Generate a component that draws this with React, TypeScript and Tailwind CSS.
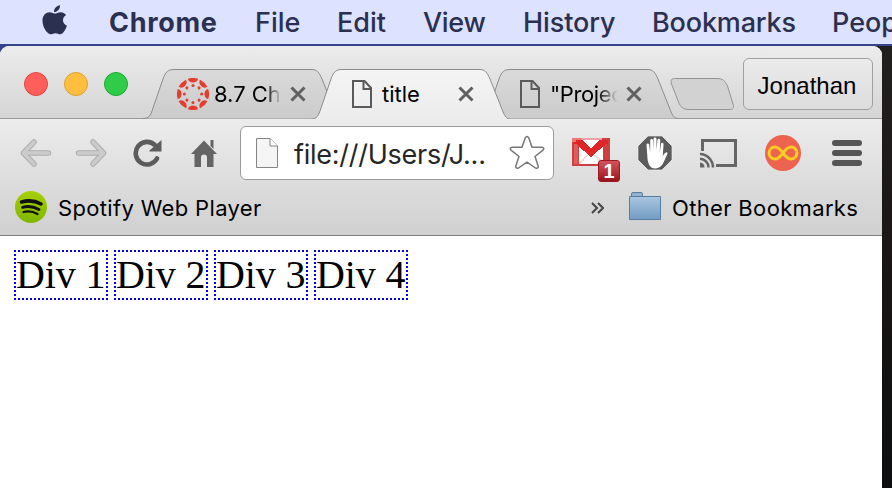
import React from "react";

const ui = "font-['Inter','Liberation_Sans',sans-serif]";

function Apple() {
  return (
    <svg className="-mt-[7px] ml-[42px] h-[32px] w-[26px] shrink-0" viewBox="0 0 27 33" preserveAspectRatio="none" fill="#2b3050">
      <path d="M18.700 1.200c.2 3.600-2.600 7-6.200 7C12.200 4.700 15.200 1.500 18.700 1.200z" />
      <path d="M13.600 9.900c1.300 0 3-1.500 5.700-1.500 2.500 0 4.500 1.200 5.700 3-4.700 2.900-4 9 .9 11-1.200 3.600-4 8.800-7.100 8.900-1.800 0-2.600-1.100-4.800-1.100s-3.100 1.100-4.800 1.100C5.600 31.400.6 24 .5 17.600.4 11.700 4.100 8.600 8 8.500c2.300 0 4.200 1.400 5.600 1.400z" />
    </svg>
  );
}

const menus = [
  { t: "File", c: "w-[82px]" },
  { t: "Edit", c: "w-[86px]" },
  { t: "View", c: "w-[100px] tracking-[-0.3px]" },
  { t: "History", c: "w-[129px] tracking-[-0.1px]" },
  { t: "Bookmarks", c: "w-[180px] tracking-[-0.15px]" },
  { t: "People", c: "w-[100px]" },
];

function MenuBar() {
  return (
    <div className={`flex h-[46px] shrink-0 items-center overflow-hidden border-b-2 border-[#36458a] bg-[#dde2ff] pt-[2px] text-[27px] font-[450] text-[#2b3050] ${ui}`}>
      <Apple />
      <span className="ml-[41px] w-[146px] shrink-0 font-bold tracking-[0.7px]">Chrome</span>
      {menus.map((m) => (
        <span key={m.t} className={`shrink-0 whitespace-nowrap ${m.c}`}>{m.t}</span>
      ))}
    </div>
  );
}

function PageIcon() {
  return (
    <svg className="h-[28px] w-[20px] shrink-0" viewBox="0 0 20 28" fill="none" stroke="#5a5a5a" strokeWidth="2">
      <path d="M1 1H12.500L19 8V27H1Z" />
      <path d="M11.500 1V9H19" />
    </svg>
  );
}

function CanvasIcon() {
  return (
    <svg className="h-8 w-8 shrink-0" viewBox="-16 -16 32 32" fill="#e63c2f">
      {[0, 45, 90, 135, 180, 225, 270, 315].map((a) => (
        <g key={a} transform={`rotate(${a})`}>
          <path d="M-5.100 -15.200A16 16 0 0 1 5.100 -15.200C4.400 -10.200 -4.400 -10.200 -5.100 -15.200Z" />
          <circle cy="-8.600" r="1.500" />
        </g>
      ))}
    </svg>
  );
}

function Close() {
  return (
    <svg className="h-4 w-4 shrink-0" viewBox="0 0 16 16" stroke="#606060" strokeWidth="3">
      <path d="M1.500 1.500L14.500 14.500M14.500 1.500L1.500 14.500" />
    </svg>
  );
}

function Tab({ active, icon, title, fade, z }: { active?: boolean; icon: React.ReactNode; title: string; fade?: string; z: string }) {
  return (
    <div className={`relative -mr-8 h-[50px] w-[200px] shrink-0 ${z}`}>
      <svg className="absolute inset-0 h-[50px] w-[200px]" viewBox="0 0 200 50">
        <defs>
          <linearGradient id={active ? "tabOn" : "tabOff"} x1="0" y1="0" x2="0" y2="1">
            <stop offset="0" stopColor={active ? "#f4f4f4" : "#dadada"} />
            <stop offset="1" stopColor={active ? "#ececec" : "#cbcbcb"} />
          </linearGradient>
        </defs>
        <path
          d={`M0 ${active ? 50.5 : 49.5}C6 49.500 7.500 47 10 39L20 10C22.500 3 25 .5 31 .5H168C174 .5 176 3 179 10L190.500 39C193.500 47 195 49.500 199 ${active ? 50.5 : 49.5}`}
          fill={`url(#${active ? "tabOn" : "tabOff"})`}
          stroke="#8c8c8c"
        />
      </svg>
      <div className="relative flex h-full items-center pl-[34px] pr-[37px]">
        {icon}
        <span className={`min-w-0 flex-1 whitespace-nowrap text-[22px] font-[430] text-black ${ui} ${fade ?? ""}`}>
          {title}
        </span>
        <Close />
      </div>
    </div>
  );
}

function TabStrip() {
  return (
    <div className="flex h-[73px] border-b border-[#9a9a9a] bg-linear-to-b from-[#ececec] to-[#d5d5d5]">
      <div className="flex w-[143px] shrink-0 gap-4 pt-[26px] pl-6">
        <i className="h-6 w-6 rounded-full border border-[#e2463f] bg-[#fe5f5a]" />
        <i className="h-6 w-6 rounded-full border border-[#e09e30] bg-[#febe3f]" />
        <i className="h-6 w-6 rounded-full border border-[#1ea934] bg-[#2fcb49]" />
      </div>
      <div className="flex pt-[23px]">
        <Tab z="z-10" fade="mr-[10px] [mask-image:linear-gradient(to_right,black_78%,transparent_102%)]" title="8.7 Ch" icon={<span className="mr-[5px] flex"><CanvasIcon /></span>} />
        <Tab z="z-20" active title="title" icon={<span className="mr-[10px] ml-[7px] flex"><PageIcon /></span>} />
        <Tab z="z-10" fade="mr-[7px] tracking-[-0.4px] [mask-image:linear-gradient(to_right,black_68%,transparent_98%)]" title={'"Projec'} icon={<span className="mr-[10px] ml-[7px] flex"><PageIcon /></span>} />
      </div>
      <svg className="mt-[31px] ml-[23px] h-[34px] w-[66px] shrink-0" viewBox="0 0 66 34" fill="#d2d2d2" stroke="#949494">
        <path d="M4.500 1.500H47C53 1.500 55 4 57.500 9L63 27C64.500 31 63 32.500 59 32.500H19C13 32.500 10.500 30 8.500 25L1.500 7C.3 3.500 1.500 1.500 4.500 1.500Z" />
      </svg>
      <div className="mt-3 ml-[7px] flex h-[52px] w-[130px] shrink-0 items-center justify-center rounded-md border border-[#a0a0a0] bg-linear-to-b from-[#ebebeb] to-[#dddddd] pt-1 pr-[2px] font-['Liberation_Sans',sans-serif] text-2xl text-black">
        Jonathan
      </div>
    </div>
  );
}

function Arrow({ flip }: { flip?: boolean }) {
  return (
    <svg className={`h-[30px] w-8 shrink-0 ${flip ? "-scale-x-100" : ""}`} viewBox="0 0 32 30" fill="none" strokeLinecap="round" strokeLinejoin="round">
      <path d="M14 4L3.500 15L14 26M4 15H28.500" stroke="#adadad" strokeWidth="5.500" />
      <path d="M14 4L3.500 15L14 26M4 15H28.500" stroke="#cbcbcb" strokeWidth="3.700" />
    </svg>
  );
}

function Reload() {
  return (
    <svg className="ml-[26px] h-[30px] w-[30px] shrink-0" viewBox="0 0 30 30">
      <path d="M24 20.500A11.300 11.300 0 1 1 22 7.200" fill="none" stroke="#5c5c5c" strokeWidth="4.600" strokeLinecap="round" />
      <path d="M28.500 2V13.500H16.500V12.500Z" fill="#5c5c5c" />
    </svg>
  );
}

function Home() {
  return (
    <svg className="ml-7 h-[29px] w-[26px] shrink-0" viewBox="0 0 26 29" fill="#646464">
      <path d="M13 1.500L26 15H22.500V28H16V18.500Q16 15.500 13 15.500T10 18.500V28H3.500V15H0Z" />
      <path d="M19.500 1H22.500V10L19.500 7Z" />
    </svg>
  );
}

function Omnibox() {
  return (
    <div className="ml-[23px] flex h-[54px] w-[314px] shrink-0 items-center rounded-md border border-[#9b9b9b] bg-white">
      <svg className="ml-[14px] h-8 w-6 shrink-0" viewBox="0 0 24 32" stroke="#858585">
        <path d="M1.500 1.500H15L22.500 9V30.500H1.500Z" fill="#f5f5f5" />
        <path d="M15 1.500V9H22.500" fill="#fff" />
      </svg>
      <span className={`mt-[4px] ml-[15px] w-[215px] shrink-0 whitespace-nowrap text-[27px] font-[430] tracking-[-0.25px] text-[#262626] ${ui}`}>file:///Users/J...</span>
      <svg className="h-9 w-9 shrink-0" viewBox="0 0 36 36" fill="#fff" stroke="#777" strokeWidth="1.500" strokeLinejoin="round">
        <path d="M16.200 3Q18 0 19.800 3L23 12.200H33Q36 13 34 15.200L26 21.500L29.200 31Q29.500 34 26.500 33L18 27.200L9.500 33Q6.500 34 6.800 31L10 21.500L2 15.200Q0 13 3 12.200H13Z" />
      </svg>
    </div>
  );
}

function Gmail() {
  return (
    <div className="relative ml-[18px] h-[54px] w-[50px] shrink-0">
      <svg className="absolute top-3 left-0 h-7 w-[38px]" viewBox="0 0 38 28" shapeRendering="crispEdges">
        <path d="M0 0H38V28H0Z" fill="#cf3f3f" />
        <path d="M2 2H6V26H2Z" fill="#e25b5b" />
        <path d="M8 0H30V2H8Z" fill="#eba3a3" />
        <path d="M7 2H31V26H7Z" fill="#fff" />
        <path d="M7 26V24L14 17H16L9 26ZM31 26V24L24 17H22L29 26Z" fill="#f3dcdc" />
        <path d="M2 2H10L19 10L28 2H36V6H34L19 19L4 6H2Z" fill="#df2626" />
        <path d="M0 0H10V2H4V4H0Z" fill="#e77" />
      </svg>
      <span className="absolute top-[34px] left-[26px] flex h-[22px] w-[22px] items-center justify-center rounded-[3px] border border-[#9c1820] bg-linear-to-b from-[#d4525c] to-[#9b101b] font-['Liberation_Sans',sans-serif] text-[20px] font-bold text-white">
        1
      </span>
    </div>
  );
}

function Extensions() {
  return (
    <>
      <svg className="ml-[15px] h-[36px] w-[36px] shrink-0" viewBox="0 0 36 36">
        <path d="M11 .8H25L35.200 11V25L25 35.200H11L.8 25V11Z" fill="#5c5c5c" stroke="#f6f6f6" strokeWidth="1" />
        <path d="M9.500 10C9.500 8 12.200 8 12.200 10L13.200 17V5.500C13.200 3.500 16 3.500 16 5.500L16.500 15V4C16.500 2 19.500 2 19.500 4V15L20.500 5C20.700 3 23.400 3.300 23.200 5.500L22.800 17L24 9C24.300 7.300 26.700 7.500 26.500 9.500L25.800 21C28 17 30.500 16.500 30.500 18.500C27.500 25 25.500 33.500 18.500 33.500C12 33.500 10.500 27 10.300 21Z" fill="#fff" />
      </svg>
      <svg className="ml-[26px] h-[30px] w-[40px] shrink-0" viewBox="0 0 40 30" fill="none" stroke="#666" strokeWidth="3">
        <path d="M3.500 13V2.500H36.500V27.500H17" />
        <path d="M1 16A13.500 13.500 0 0 1 14 29.500M1 20.700A8.800 8.800 0 0 1 9.500 29.500" strokeWidth="2.500" />
        <path d="M1 24.500A5 5 0 0 1 5.500 29.500H1Z" fill="#666" stroke="none" />
      </svg>
      <svg className="ml-[26px] h-9 w-9 shrink-0" viewBox="0 0 36 36">
        <circle cx="18" cy="18" r="18" fill="#ec634f" />
        <path d="M18 18C14.500 13.200 12.500 12 10 12A6 6 0 0 0 10 24C12.500 24 14.500 22.800 18 18S23.500 12 26 12A6 6 0 0 1 26 24C23.500 24 21.500 22.800 18 18Z" fill="none" stroke="#fccb24" strokeWidth="3" />
      </svg>
      <div className="ml-[31px] flex w-[30px] shrink-0 flex-col gap-1">
        <i className="h-[6px] rounded-full bg-[#555]" />
        <i className="h-[6px] rounded-full bg-[#555]" />
        <i className="h-[6px] rounded-full bg-[#555]" />
      </div>
    </>
  );
}

function Bookmarks() {
  return (
    <div className={`flex h-[54px] items-center text-[22px] font-[430] text-black ${ui}`}>
      <svg className="-mt-[2px] ml-[15px] h-8 w-8 shrink-0" viewBox="0 0 32 32" fill="none" stroke="#111" strokeLinecap="round">
        <defs>
          <linearGradient id="spot" x1="0" y1="0" x2="0" y2="1">
            <stop offset="0" stopColor="#a6d100" />
            <stop offset="1" stopColor="#80b500" />
          </linearGradient>
        </defs>
        <circle cx="16" cy="16" r="16" fill="url(#spot)" stroke="none" />
        <path d="M6.500 11Q17 8 26 13" strokeWidth="3.500" />
        <path d="M7.500 16.300Q16 14 24 18.500" strokeWidth="2.800" />
        <path d="M8.500 21Q16 19.300 22.500 23" strokeWidth="2.300" />
      </svg>
      <span className="ml-[11px] w-[533px] shrink-0 tracking-[0.34px]">Spotify Web Player</span>
      <svg className="h-3 w-[13px] shrink-0" viewBox="0 0 13 12" fill="none" stroke="#444" strokeWidth="2">
        <path d="M1 1L6 6L1 11M7 1L12 6L7 11" />
      </svg>
      <svg className="-mt-1 ml-[25px] h-7 w-8 shrink-0" viewBox="0 0 32 28" stroke="#587d9f">
        <defs>
          <linearGradient id="folder" x1="0" y1="0" x2="0" y2="1">
            <stop offset="0" stopColor="#a9c6e0" />
            <stop offset="1" stopColor="#739cc4" />
          </linearGradient>
        </defs>
        <path d="M2.500 5V2Q2.500 .5 4 .5H12Q13.500 .5 13.500 2V5" fill="#90b1d0" />
        <path d="M.5 4.500H31.500V27.500H.5Z" fill="url(#folder)" />
      </svg>
      <span className="ml-[11px] whitespace-nowrap tracking-[0.34px]">Other Bookmarks</span>
    </div>
  );
}

export default function App() {
  return (
    <div className="flex h-[488px] w-[892px] flex-col overflow-hidden bg-linear-to-b from-[#222] via-[#1c1614] to-[#0b0f10]">
      <MenuBar />
      <div className="flex flex-1 bg-linear-to-r from-[#36458a] from-50% to-transparent to-50%">
        <div className="flex w-[882px] flex-col overflow-hidden rounded-t-[9px] bg-white">
          <TabStrip />
          <div className="flex h-[117px] shrink-0 flex-col border-b border-[#7e7e7e] bg-linear-to-b from-[#ececec] to-[#d0d0d0]">
            <div className="flex h-[62px] shrink-0 items-center pt-[6px] pl-5">
              <Arrow />
              <span className="ml-[23px] flex"><Arrow flip /></span>
              <Reload />
              <Home />
              <Omnibox />
              <Gmail />
              <Extensions />
            </div>
            <Bookmarks />
          </div>
          <div className="flex gap-[6px] pt-[14px] pl-[14px] font-['Liberation_Serif',serif] text-[40px] leading-[46px] text-black">
            {[1, 2, 3, 4].map((n) => (
              <div key={n} className="w-[94px] border-2 border-dotted border-[#0000ee] tracking-[-0.15px]">Div {n}</div>
            ))}
          </div>
        </div>
      </div>
    </div>
  );
}
